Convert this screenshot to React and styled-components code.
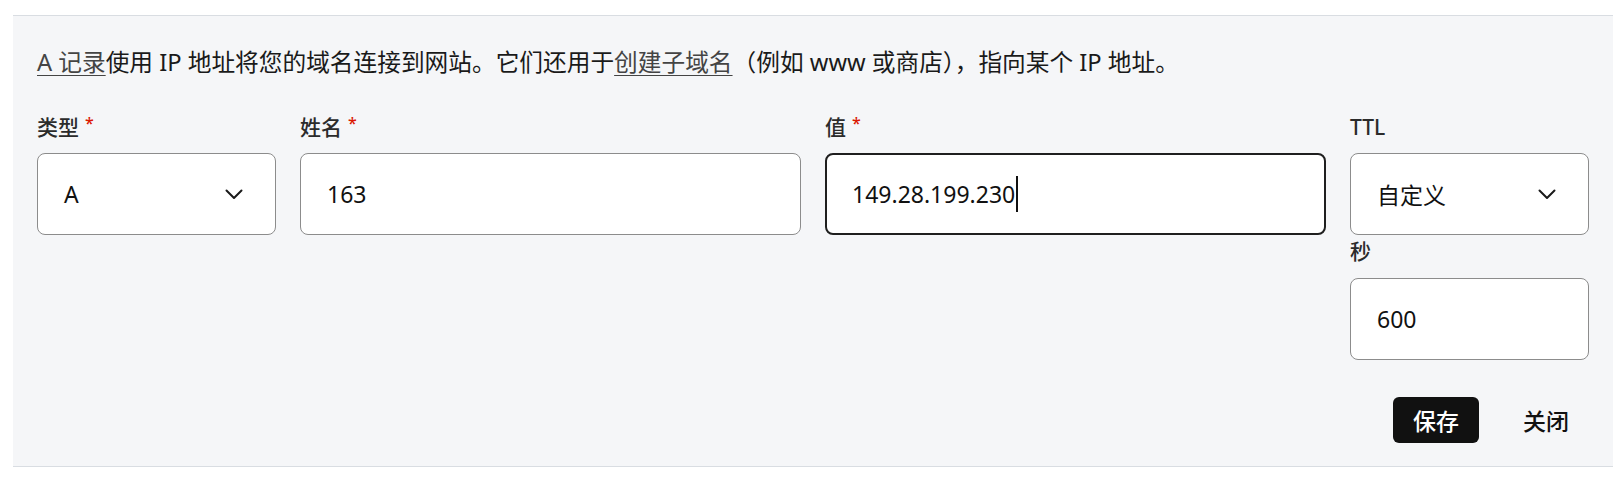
import React from 'react'
import styled, { createGlobalStyle } from 'styled-components'

const GlobalStyle = createGlobalStyle`
  body {
    margin: 0;
    background: #fff;
    font-family: "Noto Sans", "Noto Sans CJK SC", sans-serif;
    color: #111;
  }
`

const Page = styled.div`
  padding: 15px 11px 0 13px;
`

const Panel = styled.section`
  background: #f5f6f8;
  border-top: 1px solid #d9dde2;
  border-bottom: 1px solid #d9dde2;
  padding: 30px 24px 23px 24px;
`

const Intro = styled.p`
  margin: 0;
  font-size: 23.7px;
  line-height: 32px;
  color: #1a1a1a;
`

const Link = styled.a`
  color: #444;
  text-decoration: underline;
  text-underline-offset: 4px;
  text-decoration-thickness: 1px;
`

const Grid = styled.div`
  display: grid;
  grid-template-columns: 239px 1fr 1fr 239px;
  column-gap: 24px;
  margin-top: 34px;
  align-items: start;
`

const Column = styled.div`
  display: flex;
  flex-direction: column;
`

const Label = styled.label`
  display: flex;
  align-items: center;
  font-size: 21px;
  line-height: 30px;
  font-weight: 500;
  color: #2b2b2b;
  margin: ${p => (p.$sub ? '1px 0 12px' : '0 0 11px')};
`

const Required = styled.span`
  color: #db1802;
  font-size: 16px;
  margin-left: 6px;
  align-self: flex-start;
  line-height: 22px;
`

const Field = styled.div`
  box-sizing: border-box;
  height: 82px;
  display: flex;
  align-items: center;
  justify-content: space-between;
  background: #fff;
  border: ${p => (p.$focused ? '2px solid #1f1f1f' : '1px solid #8c8c8c')};
  border-radius: 8px;
  padding: ${p => (p.$focused ? '0 31px 0 25px' : '0 32px 0 26px')};
  font-size: 23px;
  color: #111;
`

const Value = styled.span`
  display: inline-flex;
  align-items: center;
`

const Caret = styled.span`
  display: inline-block;
  width: 2px;
  height: 36px;
  background: #111;
  margin-left: 1px;
`

const Actions = styled.div`
  display: flex;
  justify-content: flex-end;
  gap: 24px;
  margin-top: 37px;
`

const Button = styled.button`
  height: 46px;
  padding: 0 20px;
  border: none;
  border-radius: 6px;
  font-family: inherit;
  font-size: 23px;
  font-weight: 500;
  cursor: pointer;
  background: ${p => (p.$primary ? '#111' : 'transparent')};
  color: ${p => (p.$primary ? '#fff' : '#111')};
`

const Chevron = () => (
  <svg width="18" height="11" viewBox="0 0 18 11" fill="none">
    <path d="M1.5 1.5l7.5 7.5 7.5-7.5" stroke="#1a1a1a" strokeWidth="2" strokeLinecap="round" strokeLinejoin="round" />
  </svg>
)

export default function App() {
  return (
    <>
      <GlobalStyle />
      <Page>
        <Panel>
          <Intro>
            <Link href="#">A 记录</Link>使用 IP 地址将您的域名连接到网站。它们还用于<Link href="#">创建子域名</Link>（例如 www 或商店），指向某个 IP 地址。
          </Intro>
          <Grid>
            <Column>
              <Label>类型<Required>*</Required></Label>
              <Field>
                <Value>A</Value>
                <Chevron />
              </Field>
            </Column>
            <Column>
              <Label>姓名<Required>*</Required></Label>
              <Field>
                <Value>163</Value>
              </Field>
            </Column>
            <Column>
              <Label>值<Required>*</Required></Label>
              <Field $focused>
                <Value>149.28.199.230<Caret /></Value>
              </Field>
            </Column>
            <Column>
              <Label>TTL</Label>
              <Field>
                <Value>自定义</Value>
                <Chevron />
              </Field>
              <Label $sub>秒</Label>
              <Field>
                <Value>600</Value>
              </Field>
            </Column>
          </Grid>
          <Actions>
            <Button $primary>保存</Button>
            <Button>关闭</Button>
          </Actions>
        </Panel>
      </Page>
    </>
  )
}
